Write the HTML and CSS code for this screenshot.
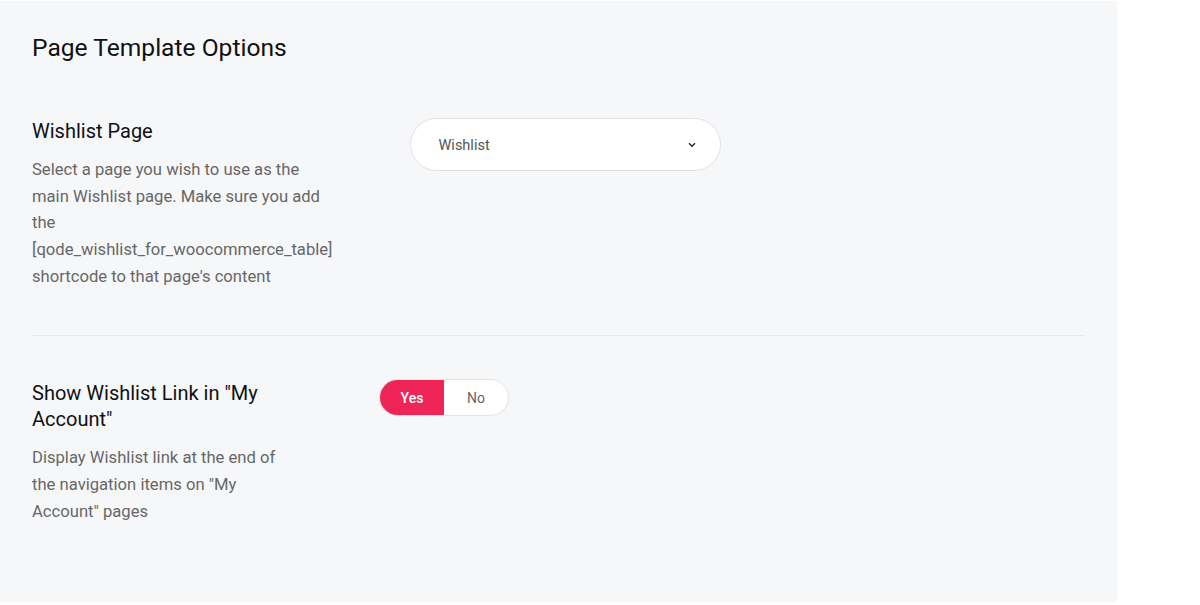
FILE: index.html
```html
<!DOCTYPE html>
<html>
<head>
<meta charset="utf-8">
<title>Page Template Options</title>
<link rel="stylesheet" href="styles.css">
</head>
<body>
    <div class="panel">
        <h2 class="panel-title">Page Template Options</h2>

        <div class="option">
            <div class="option-label">
                <h3 class="option-title">Wishlist Page</h3>
                <p class="option-desc">Select a page you wish to use as the main Wishlist page. Make sure you add the [qode_wishlist_for_woocommerce_table] shortcode to that page's content</p>
            </div>
            <div class="select">
                <span class="select-value">Wishlist</span>
                <svg class="select-arrow" width="8" height="6" viewBox="0 0 8 6">
                    <path d="M1 1.2 L4 4.2 L7 1.2" fill="none" stroke="#222" stroke-width="1.4"/>
                </svg>
            </div>
        </div>

        <div class="option">
            <div class="option-label">
                <h3 class="option-title">Show Wishlist Link in "My Account"</h3>
                <p class="option-desc">Display Wishlist link at the end of the navigation items on "My Account" pages</p>
            </div>
            <div class="switch">
                <span class="switch-item active">Yes</span>
                <span class="switch-item">No</span>
            </div>
        </div>
    </div>
</body>
</html>
```

FILE: styles.css
```css
html, body {
    margin: 0;
    padding: 0;
    background: #fff;
}
* {
    font-family: Roboto, "Liberation Sans", sans-serif;
    box-sizing: border-box;
}
body {
    padding-top: 1px;
}
.panel {
    width: 1117px;
    height: 601px;
    background: #f6f7f9;
    padding: 31px 33px 0 32px;
}
.panel-title {
    margin: 0;
    font-size: 24.6px;
    line-height: 32px;
    font-weight: 400;
    color: #111;
}
.option {
    display: flex;
    align-items: flex-start;
    gap: 77px;
    padding: 45px 0 45px;
    border-bottom: 1px solid #e6e7ea;
}
.panel-title + .option {
    padding-top: 54px;
}
.option:last-child {
    border-bottom: none;
    padding-top: 44px;
}
.option-label {
    flex: 0 0 270px;
    width: 270px;
    min-width: min-content;
}
.option-title {
    margin: 0 0 13px;
    font-size: 20px;
    line-height: 26px;
    font-weight: 400;
    color: #111;
}
.option-desc {
    margin: 0;
    font-size: 16.64px;
    line-height: 26.67px;
    color: #676767;
}
.select {
    width: 311px;
    height: 53px;
    background: #fff;
    border: 1px solid #e2e2e4;
    border-radius: 27px;
    display: flex;
    align-items: center;
    justify-content: space-between;
    padding: 1px 24px 0 28px;
}
.select-value {
    font-size: 14.5px;
    color: #555;
}
.select-arrow {
    display: block;
}
.switch {
    display: flex;
    height: 37px;
    margin-top: -1px;
    border: 1px solid #e4e4e6;
    border-radius: 19px;
    overflow: hidden;
    background: #fff;
}
.switch-item {
    width: 64px;
    display: flex;
    align-items: center;
    justify-content: center;
    font-size: 14px;
    color: #666;
}
.switch-item.active {
    background: #ef2557;
    color: #fff;
    font-weight: 500;
}
```
